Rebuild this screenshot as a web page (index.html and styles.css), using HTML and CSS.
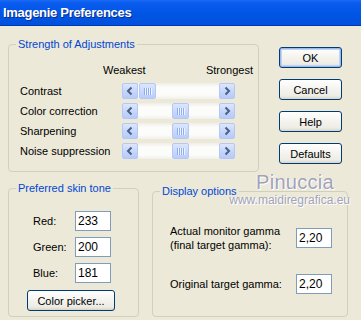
FILE: index.html
```html
<!DOCTYPE html>
<html lang="en">
<head>
    <meta charset="UTF-8">
    <title>Imagenie Preferences</title>
    <link rel="stylesheet" href="styles.css">
</head>
<body>
    <div class="window">
        <div class="titlebar">Imagenie Preferences</div>

        <div class="client">
            <div class="top">
                <fieldset class="group strength">
                    <legend>Strength of Adjustments</legend>
                    <div class="scale-head">
                        <span>Weakest</span>
                        <span>Strongest</span>
                    </div>

                    <div class="adj-row">
                        <span class="adj-label">Contrast</span>
                        <div class="hscroll">
                            <span class="arrow"><svg width="14" height="14" viewBox="0 0 14 14"><polyline points="8.5,3.5 5,7 8.5,10.5" /></svg></span>
                            <span class="track"><span class="thumb" style="margin-left: 1px"><i></i></span></span>
                            <span class="arrow"><svg width="14" height="14" viewBox="0 0 14 14"><polyline points="5.5,3.5 9,7 5.5,10.5" /></svg></span>
                        </div>
                    </div>
                    <div class="adj-row">
                        <span class="adj-label">Color correction</span>
                        <div class="hscroll">
                            <span class="arrow"><svg width="14" height="14" viewBox="0 0 14 14"><polyline points="8.5,3.5 5,7 8.5,10.5" /></svg></span>
                            <span class="track"><span class="thumb" style="margin-left: 34px"><i></i></span></span>
                            <span class="arrow"><svg width="14" height="14" viewBox="0 0 14 14"><polyline points="5.5,3.5 9,7 5.5,10.5" /></svg></span>
                        </div>
                    </div>
                    <div class="adj-row">
                        <span class="adj-label">Sharpening</span>
                        <div class="hscroll">
                            <span class="arrow"><svg width="14" height="14" viewBox="0 0 14 14"><polyline points="8.5,3.5 5,7 8.5,10.5" /></svg></span>
                            <span class="track"><span class="thumb" style="margin-left: 34px"><i></i></span></span>
                            <span class="arrow"><svg width="14" height="14" viewBox="0 0 14 14"><polyline points="5.5,3.5 9,7 5.5,10.5" /></svg></span>
                        </div>
                    </div>
                    <div class="adj-row">
                        <span class="adj-label">Noise suppression</span>
                        <div class="hscroll">
                            <span class="arrow"><svg width="14" height="14" viewBox="0 0 14 14"><polyline points="8.5,3.5 5,7 8.5,10.5" /></svg></span>
                            <span class="track"><span class="thumb" style="margin-left: 34px"><i></i></span></span>
                            <span class="arrow"><svg width="14" height="14" viewBox="0 0 14 14"><polyline points="5.5,3.5 9,7 5.5,10.5" /></svg></span>
                        </div>
                    </div>
                </fieldset>

                <div class="buttons">
                    <button class="btn default">OK</button>
                    <button class="btn">Cancel</button>
                    <button class="btn">Help</button>
                    <button class="btn">Defaults</button>
                </div>
            </div>

            <div class="bottom">
                <fieldset class="group skin">
                    <legend>Preferred skin tone</legend>
                    <div class="field-row"><span class="field-label">Red:</span><input class="num" type="text" value="233"></div>
                    <div class="field-row"><span class="field-label">Green:</span><input class="num" type="text" value="200"></div>
                    <div class="field-row"><span class="field-label">Blue:</span><input class="num" type="text" value="181"></div>
                    <button class="btn picker">Color picker...</button>
                </fieldset>

                <fieldset class="group display">
                    <legend>Display options</legend>
                    <div class="gamma-row first">
                        <span class="gamma-label">Actual monitor gamma<br>(final target gamma):</span>
                        <input class="num" type="text" value="2,20">
                    </div>
                    <div class="gamma-row">
                        <span class="gamma-label">Original target gamma:</span>
                        <input class="num" type="text" value="2,20">
                    </div>
                </fieldset>
            </div>
        </div>

        <div class="watermark">
            <span class="wm-name">Pinuccia</span>
            <span class="wm-url">www.maidiregrafica.eu</span>
        </div>
    </div>
</body>
</html>
```

FILE: styles.css
```css
body {
    margin: 0;
    padding: 0;
    background-color: #ECE9D8;
    font-family: "Liberation Sans", Arial, sans-serif;
    font-size: 11px;
    color: #000;
}
.window {
    position: relative;
    width: 361px;
    height: 320px;
    overflow: hidden;
    background-color: #ECE9D8;
}
.titlebar {
    height: 25px;
    border-bottom: 1px solid #0036B4;
    padding-left: 3px;
    line-height: 25px;
    font-size: 13px;
    font-weight: bold;
    letter-spacing: -0.3px;
    color: #fff;
    text-shadow: 1px 1px 0 #0A2C8C;
    background: linear-gradient(#1C6BF5 0, #0A5CEE 3px, #0055E5 55%, #0051DC 100%);
}
.client {
    padding: 12px 0 0 8px;
}
.top {
    display: flex;
    align-items: flex-start;
}

/* group boxes */
.group {
    box-sizing: border-box;
    min-width: 0;
    margin: 0;
    border: 1px solid #D0D0BF;
    border-radius: 4px;
}
.group legend {
    margin-left: 7px;
    padding: 0 2px;
    line-height: 13px;
    color: #0046D5;
}
.strength {
    width: 251px;
    padding: 13px 5px 12px 11px;
}
.strength legend {
    margin-left: -4px;
}
.scale-head {
    display: flex;
    justify-content: space-between;
    line-height: 13px;
    margin: 0 0 6px 83px;
}
.adj-row {
    display: flex;
    align-items: center;
    height: 16px;
    margin-bottom: 4px;
}
.adj-row:last-child {
    margin-bottom: 0;
}
.adj-label {
    width: 102px;
}

/* scroll bar sliders */
.hscroll {
    display: flex;
    width: 113px;
    height: 16px;
}
.arrow {
    box-sizing: border-box;
    width: 16px;
    height: 16px;
    display: flex;
    align-items: center;
    justify-content: center;
    border: 1px solid #B4C8F6;
    border-radius: 2px;
    background: linear-gradient(#DCE6FD, #C3D4FC 60%, #B7CBFA);
}
.arrow polyline {
    fill: none;
    stroke: #4D6185;
    stroke-width: 2;
}
.track {
    flex: 1;
    display: flex;
    align-items: stretch;
    background: linear-gradient(#EEEDE7, #FCFCFA 25%, #FCFCFA 75%, #F1F0EA);
}
.thumb {
    box-sizing: border-box;
    width: 17px;
    display: flex;
    align-items: center;
    justify-content: center;
    border: 1px solid #B4C8F6;
    border-radius: 2px;
    background: linear-gradient(#DCE6FD, #C6D6FC 60%, #BACDFA);
}
.thumb i {
    width: 8px;
    height: 7px;
    background: repeating-linear-gradient(to right, #8EAEF4 0, #8EAEF4 1px, #EEF3FE 1px, #EEF3FE 2px);
}

/* push buttons */
.buttons {
    display: flex;
    flex-direction: column;
    gap: 11px;
    margin: 9px 0 0 20px;
}
.btn {
    box-sizing: border-box;
    width: 63px;
    height: 21px;
    padding: 0;
    font-family: "Liberation Sans", Arial, sans-serif;
    font-size: 11px;
    color: #000;
    border: 1px solid #003C74;
    border-radius: 3px;
    background: linear-gradient(#FFFFFF, #F4F3EE 50%, #ECEBE4 85%, #D8D3C6);
}
.btn.default {
    box-shadow: inset 0 0 0 1px #9DB9EB, inset 0 0 0 2px #C2D4F6;
}

/* bottom row */
.bottom {
    display: flex;
    align-items: stretch;
    gap: 13px;
    height: 135px;
    margin-top: 10px;
}
.skin {
    width: 131px;
    padding: 16px 0 0 0;
}
.field-row {
    display: flex;
    align-items: center;
    height: 20px;
    margin-bottom: 6px;
    padding-left: 24px;
}
.field-label {
    width: 42px;
}
.num {
    box-sizing: border-box;
    width: 36px;
    height: 20px;
    margin: 0;
    padding: 0 2px;
    border: 1px solid #7F9DB9;
    font-family: "Liberation Sans", Arial, sans-serif;
    font-size: 12px;
    color: #000;
    background: #fff;
}
.picker {
    width: 88px;
    margin: 1px 0 0 18px;
}
.display {
    width: 196px;
    margin-top: 3px;
    padding: 26px 0 0 17px;
}
.display legend {
    margin-left: -10px;
}
.gamma-row {
    display: flex;
    align-items: center;
    line-height: 14px;
}
.gamma-row.first {
    margin-bottom: 22px;
}
.gamma-label {
    width: 126px;
}

/* watermark */
.watermark {
    position: absolute;
    left: 226px;
    top: 171px;
    width: 124px;
    display: flex;
    flex-direction: column;
    align-items: flex-end;
    color: #A3A3B5;
    text-shadow: 1px 1px 0 #fff, -1px 0 0 #F4F4F8;
}
.wm-name {
    margin-right: 16px;
    font-size: 20px;
    line-height: 22px;
    letter-spacing: 0.3px;
}
.wm-url {
    font-size: 12px;
    line-height: 14px;
}
```
